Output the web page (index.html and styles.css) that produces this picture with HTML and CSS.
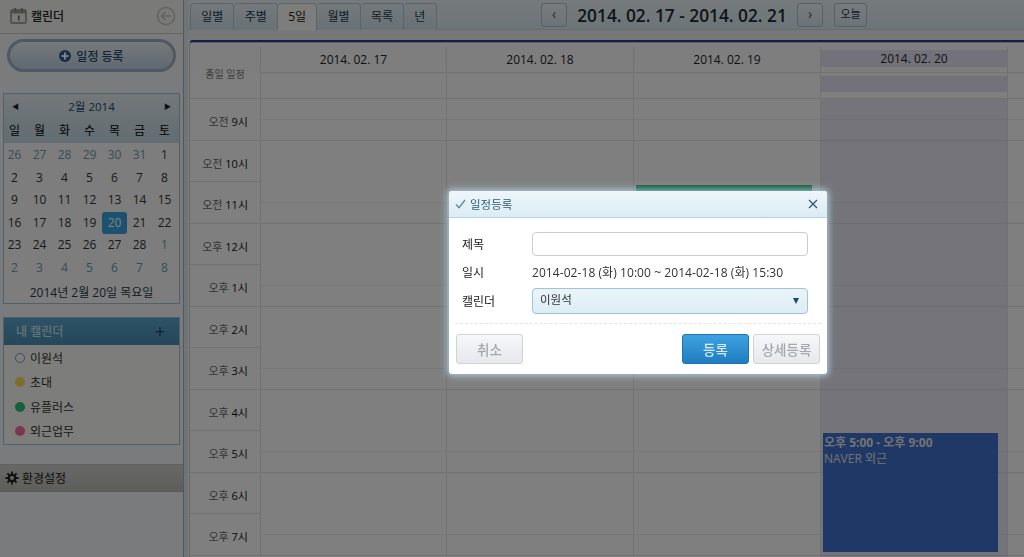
FILE: index.html
```html
<!DOCTYPE html>
<html lang="ko">
<head>
  <meta charset="UTF-8" />
  <title>캘린더</title>
  <link rel="stylesheet" href="styles.css">
</head>
<body>
  <div class="app">
    <aside class="sidebar">
      <div class="side-head">
        <svg class="cal-icon" width="17" height="17" viewBox="0 0 17 17"><rect x="1" y="3" width="15" height="13" rx="1" fill="#f0f0e8" stroke="#8a8a84" stroke-width="1.4"/><rect x="1" y="3" width="15" height="3.5" fill="#9a9a94"/><rect x="4" y="1" width="2" height="4" fill="#8a8a84"/><rect x="11" y="1" width="2" height="4" fill="#8a8a84"/><rect x="8" y="8.5" width="1.5" height="5" fill="#666"/></svg>
        <span class="side-title">캘린더</span>
        <svg class="back-icon" width="20" height="20" viewBox="0 0 20 20"><circle cx="10" cy="10" r="8.5" fill="none" stroke="#c4c4c0" stroke-width="1.5"/><path d="M15 10H6M9.5 6L5.5 10l4 4" fill="none" stroke="#c4c4c0" stroke-width="1.6"/></svg>
      </div>
      <div class="add-wrap">
        <button class="add-btn">
          <svg width="12" height="12" viewBox="0 0 12 12"><circle cx="6" cy="6" r="6" fill="#2f5f9c"/><path d="M6 2.5v7M2.5 6h7" stroke="#fff" stroke-width="2"/></svg>
          일정 등록
        </button>
      </div>

      <div class="mini-cal">
        <div class="mini-top">
          <div class="mini-nav"><span class="tri">◀</span><span>2월 2014</span><span class="tri">▶</span></div>
          <div class="mini-week">
            <span>일</span><span>월</span><span>화</span><span>수</span><span>목</span><span>금</span><span>토</span>
          </div>
        </div>
        <div class="mini-days">
          <span class="off">26</span><span class="off">27</span><span class="off">28</span><span class="off">29</span><span class="off">30</span><span class="off">31</span><span>1</span>
          <span>2</span><span>3</span><span>4</span><span>5</span><span>6</span><span>7</span><span>8</span>
          <span>9</span><span>10</span><span>11</span><span>12</span><span>13</span><span>14</span><span>15</span>
          <span>16</span><span>17</span><span>18</span><span>19</span><span class="today">20</span><span>21</span><span>22</span>
          <span>23</span><span>24</span><span>25</span><span>26</span><span>27</span><span>28</span><span class="off">1</span>
          <span class="off">2</span><span class="off">3</span><span class="off">4</span><span class="off">5</span><span class="off">6</span><span class="off">7</span><span class="off">8</span>
        </div>
        <div class="mini-foot">2014년 2월 20일 목요일</div>
      </div>

      <div class="my-cal">
        <div class="my-head"><span>내 캘린더</span><b class="plus">+</b></div>
        <ul class="my-list">
          <li><i class="dot dot-blue"></i>이원석</li>
          <li><i class="dot dot-yellow"></i>초대</li>
          <li><i class="dot dot-green"></i>유플러스</li>
          <li><i class="dot dot-pink"></i>외근업무</li>
        </ul>
      </div>

      <div class="settings">
        <svg width="14" height="14" viewBox="0 0 14 14"><circle cx="7" cy="7" r="3.2" fill="none" stroke="#222" stroke-width="2.2"/><path d="M7 .5v3M7 10.5v3M.5 7h3M10.5 7h3M2.4 2.4l2.1 2.1M9.5 9.5l2.1 2.1M2.4 11.6l2.1-2.1M9.5 4.5l2.1-2.1" stroke="#222" stroke-width="1.8"/></svg>
        환경설정
      </div>
    </aside>

    <main class="main">
      <div class="toolbar">
        <div class="tabs">
          <span class="tab">일별</span><span class="tab">주별</span><span class="tab active">5일</span><span class="tab">월별</span><span class="tab">목록</span><span class="tab">년</span>
        </div>
        <div class="range">
          <span class="nav-btn">‹</span>
          <span class="range-text">2014. 02. 17 - 2014. 02. 21</span>
          <span class="nav-btn">›</span>
          <span class="today-btn">오늘</span>
        </div>
      </div>
      <div class="strip"></div>

      <div class="board">
        <div class="grid-head">
          <div class="gutter"></div>
          <div class="day">2014. 02. 17</div>
          <div class="day">2014. 02. 18</div>
          <div class="day">2014. 02. 19</div>
          <div class="day is-today"><span>2014. 02. 20</span></div>
          <div class="day day-rest"></div>
        </div>
        <div class="grid-allday">
          <div class="gutter allday-label">종일 일정</div>
          <div class="day"></div>
          <div class="day"></div>
          <div class="day"></div>
          <div class="day is-today"><span></span></div>
          <div class="day day-rest"></div>
        </div>
        <div class="grid-body">
          <div class="hours">
            <div class="hour">오전 <b>9시</b></div>
            <div class="hour">오전 <b>10시</b></div>
            <div class="hour">오전 <b>11시</b></div>
            <div class="hour">오후 <b>12시</b></div>
            <div class="hour">오후 <b>1시</b></div>
            <div class="hour">오후 <b>2시</b></div>
            <div class="hour">오후 <b>3시</b></div>
            <div class="hour">오후 <b>4시</b></div>
            <div class="hour">오후 <b>5시</b></div>
            <div class="hour">오후 <b>6시</b></div>
            <div class="hour">오후 <b>7시</b></div>
          </div>
          <div class="col"></div>
          <div class="col"></div>
          <div class="col"><div class="event event-green"></div></div>
          <div class="col col-today">
            <div class="event event-blue"><strong>오후 5:00 - 오후 9:00</strong><br>NAVER 외근</div>
          </div>
          <div class="col col-rest"></div>
        </div>
      </div>
    </main>
  </div>

  <div class="mask"></div>

  <div class="modal">
    <div class="modal-head">
      <svg class="check" width="11" height="10" viewBox="0 0 11 10"><path d="M1 5.5l3 3.2L10 1" fill="none" stroke="#5f8a9c" stroke-width="1.4"/></svg>
      <span class="modal-title">일정등록</span>
      <svg class="close" width="10" height="10" viewBox="0 0 10 10"><path d="M1 1l8 8M9 1l-8 8" stroke="#2d5c75" stroke-width="1.3"/></svg>
    </div>
    <div class="modal-body">
      <div class="form-row row-title"><label>제목</label><input class="input" type="text"></div>
      <div class="form-row row-date"><label>일시</label><span class="date-text">2014-02-18 (화) 10:00 ~ 2014-02-18 (화) 15:30</span></div>
      <div class="form-row row-cal"><label>캘린더</label>
        <div class="select"><span>이원석</span><i class="caret"></i></div>
      </div>
    </div>
    <div class="modal-foot">
      <button class="btn btn-grey">취소</button>
      <span class="foot-space"></span>
      <button class="btn btn-blue">등록</button>
      <button class="btn btn-grey">상세등록</button>
    </div>
  </div>
</body>
</html>
```

FILE: styles.css
```css
* {
  box-sizing: border-box;
  margin: 0;
  padding: 0;
}

html, body {
  height: 100%;
  overflow: hidden;
}

body {
  font-family: "Open Sans", "Noto Sans CJK KR", sans-serif;
  font-size: 12px;
  color: #222;
  background: #fff;
}

.app {
  display: flex;
  height: 557px;
}

/* sidebar */
.sidebar {
  width: 188px;
  flex: none;
  background: #f2f7fb;
  border-right: 4px solid #dfe8ec;
  box-shadow: inset -1px 0 0 #a9b0b4;
}

.side-head {
  height: 34px;
  display: flex;
  align-items: center;
  padding: 0 7px 2px 10px;
  background: #f5f5f0;
  border-bottom: 1px solid #c8c8c0;
  width: 183px;
}

.side-title {
  margin-left: 4px;
  font-weight: 500;
  font-size: 12px;
  color: #222;
}

.back-icon {
  margin-left: auto;
}

.add-wrap {
  padding: 5px 7px 0 7px;
  width: 183px;
}

.add-btn {
  width: 100%;
  height: 33px;
  border: 3px solid #a0b1c6;
  border-radius: 17px;
  background: linear-gradient(#eef3f7, #bfd2e1);
  font: 500 12px "Open Sans", "Noto Sans CJK KR", sans-serif;
  color: #1f4a6d;
  display: flex;
  align-items: center;
  justify-content: center;
  gap: 5px;
}

.mini-cal {
  width: 177px;
  margin: 21px 0 0 3px;
  border: 1px solid #a9c0ce;
  background: #fafafa;
}

.mini-top {
  background: linear-gradient(#e8f0f5, #c4d8e4);
  height: 49px;
}

.mini-nav {
  display: flex;
  justify-content: space-between;
  align-items: center;
  height: 24px;
  padding: 0 8px;
  color: #1f4a6d;
  font-size: 11.5px;
}

.tri {
  font-size: 7px;
  color: #123;
}

.mini-week {
  display: grid;
  grid-template-columns: repeat(7, 1fr);
  width: 175px;
  margin-left: -2px;
  text-align: center;
  font-size: 12px;
  line-height: 25px;
  color: #000;
}

.mini-days {
  display: grid;
  grid-template-columns: repeat(7, 1fr);
  grid-auto-rows: 22.6px;
  width: 175px;
  margin-left: -2px;
  padding-top: 1px;
  text-align: center;
  line-height: 22px;
  font-size: 12px;
  color: #333;
}

.mini-days .off {
  color: #6f99ad;
}

.mini-days .today {
  background: #36a4dc;
  border-radius: 3px;
  color: #fff;
}

.mini-foot {
  text-align: center;
  height: 23px;
  line-height: 26px;
  font-size: 12px;
  color: #1f3b4d;
}

.my-cal {
  width: 177px;
  margin: 13px 0 0 3px;
  border: 1px solid #9fc0cf;
  background: #fbfbf6;
}

.my-head {
  height: 27px;
  background: linear-gradient(#5aa6cc, #4a8fb4);
  color: #cfe4ee;
  display: flex;
  align-items: center;
  justify-content: space-between;
  padding: 0 14px 0 12px;
  font-weight: 500;
  font-size: 12px;
}

.plus {
  font-size: 18px;
  font-weight: 400;
  color: #0f4a75;
}

.my-list {
  list-style: none;
  padding: 1px 0 1px 11px;
}

.my-list li {
  height: 24.4px;
  display: flex;
  align-items: center;
  gap: 5px;
  font-size: 12px;
  color: #333;
}

.dot {
  width: 10px;
  height: 10px;
  border-radius: 50%;
}

.dot-blue { border: 1.5px solid #7f8fd0; background: #fff; }
.dot-yellow { background: #f8dc5c; }
.dot-green { background: #27c27a; }
.dot-pink { background: #f4709c; }

.settings {
  width: 183px;
  height: 28px;
  margin-top: 19px;
  display: flex;
  align-items: center;
  gap: 3px;
  padding-left: 5px;
  background: linear-gradient(#d0d0cc, #bcbcb8);
  border-top: 1px solid #c0c0ba;
  border-bottom: 1px solid #b0b0aa;
  font-size: 12px;
  color: #222;
}

/* main area */
.main {
  flex: 1;
  min-width: 0;
}

.toolbar {
  height: 30px;
  display: flex;
  background: linear-gradient(#ecf4f8, #dcebf2);
  border-bottom: 1px solid #c3d7df;
}

.strip {
  height: 10px;
  background: repeating-linear-gradient(#f2f6f7 0, #f2f6f7 1px, #e6ecee 1px, #e6ecee 2px);
}

.tabs {
  display: flex;
  padding: 3px 0 0 2px;
  width: 353px;
}

.tab {
  height: 27px;
  line-height: 25px;
  padding: 0 10.2px;
  text-align: center;
  border: 1px solid #b4cbd6;
  border-bottom: none;
  border-left-width: 0;
  border-radius: 4px 4px 0 0;
  background: linear-gradient(#eaf3f7, #d0e3ec);
  color: #1f3b4d;
  font-size: 12px;
}

.tab:first-child {
  border-left-width: 1px;
}

.tab.active {
  background: #fbfbf8;
  color: #222;
  height: 28px;
}

.range {
  display: flex;
  align-items: flex-start;
  padding-top: 3px;
}

.nav-btn {
  width: 26px;
  height: 24px;
  border: 1px solid #aac2cd;
  border-radius: 3px;
  background: linear-gradient(#f2f7fa, #d8e7ee);
  text-align: center;
  line-height: 20px;
  font-size: 14px;
  color: #456;
}

.range-text {
  font-size: 17.3px;
  font-weight: 600;
  line-height: 25px;
  width: 230px;
  text-align: center;
  color: #1c2a33;
  white-space: nowrap;
}

.today-btn {
  margin-left: 11px;
  width: 33px;
  height: 24px;
  border: 1px solid #aac2cd;
  border-radius: 3px;
  background: linear-gradient(#f2f7fa, #d8e7ee);
  text-align: center;
  line-height: 20px;
  font-size: 11px;
  color: #1f3b4d;
}

.board {
  margin-left: 1px;
  border-top: 2px solid #2b3c8c;
  border-left: 1px solid #c8c8c8;
  padding-top: 5px;
  border-top-left-radius: 4px;
  height: 517px;
  box-shadow: inset 0 1px 0 #c0c0e0;
}

.grid-head,
.grid-allday,
.grid-body {
  display: grid;
  grid-template-columns: 70px 186px 187px 187px 187px 1fr;
}

.grid-head {
  height: 24px;
  background: #fdfdfd;
}

.grid-head .day {
  border-bottom: 1px solid #e4e4e4;
}

.grid-allday {
  height: 28px;
  border-bottom: 1px solid #e4e4e4;
}

.day {
  border-left: 1px solid #e4e4e4;
  text-align: center;
  line-height: 25px;
  font-size: 12px;
  color: #222;
}

.is-today span {
  display: block;
  height: 17px;
  margin-top: 3px;
  line-height: 18px;
  background: #e6e5f4;
}

.grid-allday .is-today span {
  margin-top: 5px;
  height: 16px;
}

.allday-label {
  font-size: 10px;
  color: #777;
  text-align: center;
  margin-top: -24px;
  line-height: 54px;
  height: 52px;
}

.hour {
  height: 41.5px;
  line-height: 45px;
  text-align: right;
  padding-right: 12px;
  font-size: 11px;
  color: #666;
  border-bottom: 1px solid #e4e4e4;
}

.hour b {
  font-weight: 400;
  color: #111;
}

.grid-body {
  height: 459px;
}

.col {
  position: relative;
  border-left: 1px solid #e4e4e4;
  background: repeating-linear-gradient(#fff 0, #fff 20.25px, #f0f0f0 20.25px, #f0f0f0 20.75px, #fff 20.75px, #fff 41px, #e4e4e4 41px, #e4e4e4 41.5px);
}

.col-today {
  background: repeating-linear-gradient(#e9e8f4 0, #e9e8f4 20.25px, #dfdeea 20.25px, #dfdeea 20.75px, #e9e8f4 20.75px, #e9e8f4 41px, #d6d5e2 41px, #d6d5e2 41.5px);
}

.event {
  position: absolute;
  color: #e6e6e6;
  font-size: 12px;
  line-height: 16px;
  padding: 2px 1px;
}

.event-green {
  left: 2px;
  right: 8px;
  top: 86px;
  height: 83px;
  background: #30b878;
}

.event-blue {
  left: 2px;
  right: 9px;
  top: 334px;
  height: 119px;
  background: #3e70cc;
}

/* modal */
.mask {
  position: fixed;
  inset: 0;
  background: rgba(0, 0, 0, 0.5);
}

.modal {
  position: fixed;
  left: 449px;
  top: 191px;
  width: 378px;
  height: 183px;
  background: #fff;
  border-radius: 3px;
  box-shadow: 0 0 6px 2px rgba(190, 230, 250, 0.7);
}

.modal-head {
  height: 27px;
  display: flex;
  align-items: center;
  padding: 0 9px 0 6px;
  background: linear-gradient(#eef6fa, #dcecf4);
  border-bottom: 1px solid #b5d3e0;
  border-radius: 3px 3px 0 0;
}

.check {
  margin-right: 4px;
}

.modal-title {
  color: #2d5c75;
  font-size: 11.5px;
}

.close {
  margin-left: auto;
}

.modal-body {
  margin: 0 6px;
  padding: 14px 13px 10px 7px;
  border-bottom: 1px dashed #e4e4e4;
  height: 106px;
}

.form-row {
  display: flex;
  align-items: center;
  font-size: 12px;
  color: #333;
}

.form-row label {
  width: 70px;
  flex: none;
  color: #222;
  font-size: 12px;
}

.date-text {
  letter-spacing: 0.07px;
}

.row-title { height: 24px; }
.row-date { height: 32px; }
.row-cal { height: 26px; }

.input {
  width: 276px;
  height: 24px;
  border: 1px solid #ccd;
  border-radius: 4px;
  background: #fff;
}

.select {
  width: 276px;
  height: 26px;
  display: flex;
  align-items: center;
  justify-content: space-between;
  padding: 0 8px 4px 7px;
  border: 1px solid #9fc4d4;
  border-radius: 4px;
  background: linear-gradient(#eaf4f8, #dcedf4);
  font-size: 11.5px;
}

.caret {
  margin-top: 4px;
  border-left: 3.5px solid transparent;
  border-right: 3.5px solid transparent;
  border-top: 6px solid #1f4a6d;
}

.modal-foot {
  display: flex;
  gap: 4px;
  padding: 10px 7px 0 7px;
}

.foot-space {
  flex: 1;
}

.btn {
  width: 67px;
  height: 30px;
  border-radius: 3px;
  font: 500 13.5px "Open Sans", "Noto Sans CJK KR", sans-serif;
}

.btn-grey {
  background: linear-gradient(#f6f7f9, #e6e8ec);
  border: 1px solid #cfd2d6;
  color: #a4a8ac;
}

.btn-blue {
  background: linear-gradient(#3ea2e2, #1f7cc0);
  border: 1px solid #1f74b0;
  color: #d6ecf8;
}
```
